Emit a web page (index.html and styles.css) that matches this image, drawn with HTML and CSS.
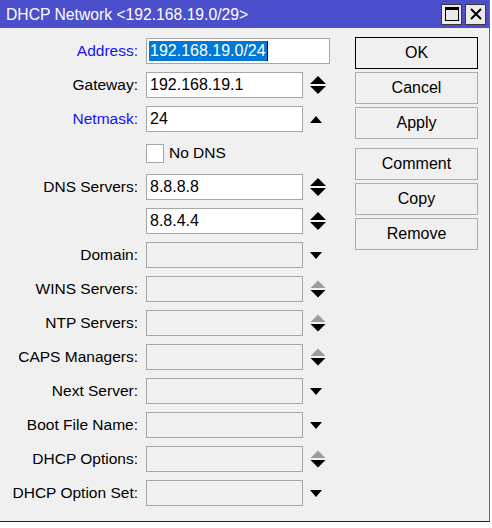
FILE: index.html
```html
<!DOCTYPE html>
<html>
<head>
<meta charset="utf-8">
<link rel="stylesheet" href="styles.css">
</head>
<body>
<div class="window">
  <div class="titlebar">
    <span class="title">DHCP Network &lt;192.168.19.0/29&gt;</span>
    <div class="tbtns">
      <div class="tbtn"><svg width="14" height="14" viewBox="0 0 14 14"><rect x="0.5" y="0.5" width="13" height="13" fill="none" stroke="#000" stroke-width="1"/><rect x="0" y="0" width="14" height="3" fill="#000"/></svg></div>
      <div class="tbtn"><svg width="12" height="12" viewBox="0 0 12 12"><path d="M1 1 L11 11 M11 1 L1 11" stroke="#000" stroke-width="2" fill="none"/></svg></div>
    </div>
  </div>
  <div class="content">
    <div class="form">
      <label class="lbl req">Address:</label>
      <div class="field wide white"><span class="sel">192.168.19.0/24</span></div>

      <label class="lbl">Gateway:</label>
      <div class="field white">192.168.19.1</div>
      <div class="arr"><svg width="16" height="20" viewBox="0 0 16 20"><polygon points="0,9 8,1 16,9" fill="#000"/><polygon points="0,11 16,11 8,19" fill="#000"/></svg></div>

      <label class="lbl req">Netmask:</label>
      <div class="field white">24</div>
      <div class="arr"><svg width="12" height="7" viewBox="0 0 12 7"><polygon points="0,7 6,0 12,7" fill="#000"/></svg></div>

      <div class="lbl"></div>
      <div class="check"><span class="box"></span><span>No DNS</span></div>

      <label class="lbl">DNS Servers:</label>
      <div class="field white">8.8.8.8</div>
      <div class="arr"><svg width="16" height="20" viewBox="0 0 16 20"><polygon points="0,9 8,1 16,9" fill="#000"/><polygon points="0,11 16,11 8,19" fill="#000"/></svg></div>

      <div class="lbl"></div>
      <div class="field white">8.8.4.4</div>
      <div class="arr"><svg width="16" height="20" viewBox="0 0 16 20"><polygon points="0,9 8,1 16,9" fill="#000"/><polygon points="0,11 16,11 8,19" fill="#000"/></svg></div>

      <label class="lbl">Domain:</label>
      <div class="field"></div>
      <div class="arr"><svg width="12" height="7" viewBox="0 0 12 7"><polygon points="0,0 12,0 6,7" fill="#000"/></svg></div>

      <label class="lbl">WINS Servers:</label>
      <div class="field"></div>
      <div class="arr"><svg width="16" height="20" viewBox="0 0 16 20"><polygon points="0.5,9 8,1.5 15.5,9" fill="#9a9e9a"/><polygon points="0.5,11 15.5,11 8,18.5" fill="#000"/></svg></div>

      <label class="lbl">NTP Servers:</label>
      <div class="field"></div>
      <div class="arr"><svg width="16" height="20" viewBox="0 0 16 20"><polygon points="0.5,9 8,1.5 15.5,9" fill="#9a9e9a"/><polygon points="0.5,11 15.5,11 8,18.5" fill="#000"/></svg></div>

      <label class="lbl">CAPS Managers:</label>
      <div class="field"></div>
      <div class="arr"><svg width="16" height="20" viewBox="0 0 16 20"><polygon points="0.5,9 8,1.5 15.5,9" fill="#9a9e9a"/><polygon points="0.5,11 15.5,11 8,18.5" fill="#000"/></svg></div>

      <label class="lbl">Next Server:</label>
      <div class="field"></div>
      <div class="arr"><svg width="12" height="7" viewBox="0 0 12 7"><polygon points="0,0 12,0 6,7" fill="#000"/></svg></div>

      <label class="lbl">Boot File Name:</label>
      <div class="field"></div>
      <div class="arr"><svg width="12" height="7" viewBox="0 0 12 7"><polygon points="0,0 12,0 6,7" fill="#000"/></svg></div>

      <label class="lbl">DHCP Options:</label>
      <div class="field"></div>
      <div class="arr"><svg width="16" height="20" viewBox="0 0 16 20"><polygon points="0.5,9 8,1.5 15.5,9" fill="#9a9e9a"/><polygon points="0.5,11 15.5,11 8,18.5" fill="#000"/></svg></div>

      <label class="lbl">DHCP Option Set:</label>
      <div class="field"></div>
      <div class="arr"><svg width="12" height="7" viewBox="0 0 12 7"><polygon points="0,0 12,0 6,7" fill="#000"/></svg></div>
    </div>
    <div class="buttons">
      <div class="btn default">OK</div>
      <div class="btn">Cancel</div>
      <div class="btn">Apply</div>
      <div class="btn sep">Comment</div>
      <div class="btn">Copy</div>
      <div class="btn">Remove</div>
    </div>
  </div>
</div>
</body>
</html>
```
FILE: styles.css
```css
* { box-sizing: border-box; }
html, body { margin: 0; padding: 0; background: #ffffff; }
body { font-family: "Liberation Sans", Arial, sans-serif; color: #000; }

.window {
  width: 490px;
  height: 522px;
  background: #f0f0f0;
  border-right: 1px solid #6a6a6a;
  border-bottom: 1px solid #202020;
  display: flex;
  flex-direction: column;
}

.titlebar {
  flex: 0 0 28px;
  height: 28px;
  background: #4b4fcb;
  color: #ffffff;
  display: flex;
  align-items: center;
  justify-content: space-between;
  padding-left: 6px;
  padding-right: 3px;
}
.title { font-size: 15.7px; margin-top: 2px; }
.tbtns { display: flex; gap: 3px; }
.tbtn {
  width: 21px;
  height: 21px;
  background: #eceae8;
  border: 1px solid #3a3a3a;
  display: flex;
  align-items: center;
  justify-content: center;
}

.content {
  display: flex;
  align-items: flex-start;
  min-height: 0;
}

.form {
  display: grid;
  grid-template-columns: 146px 157px 27px;
  grid-auto-rows: 26px;
  row-gap: 8px;
  padding-top: 10px;
}

.lbl {
  font-size: 15.5px;
  text-align: right;
  padding-right: 8px;
  align-self: center;
  white-space: nowrap;
}
.lbl.req { color: #1414f0; }

.field {
  height: 26px;
  border: 1px solid #a6a6a6;
  font-size: 16px;
  line-height: 24px;
  padding-left: 3px;
  white-space: nowrap;
  overflow: hidden;
}
.field.white { background: #ffffff; }
.field.wide { grid-column: 2 / 4; padding-left: 2px; }
.sel {
  display: inline-block;
  background: #0078d7;
  color: #ffffff;
  line-height: 20px;
  padding: 0 1px;
  border-right: 1px solid #000;
  vertical-align: middle;
  margin-top: -2px;
}

.arr {
  display: flex;
  align-items: center;
  padding-left: 7px;
}

.check {
  display: flex;
  align-items: center;
  gap: 5px;
  font-size: 15.5px;
  grid-column: 2 / 4;
}
.box {
  width: 18px;
  height: 19px;
  background: #ffffff;
  border: 1px solid #a6a6a6;
}

.buttons {
  margin-left: 25px;
  padding-top: 9px;
  display: flex;
  flex-direction: column;
  gap: 3px;
}
.btn {
  width: 123px;
  height: 32px;
  border: 1px solid #adadad;
  background: #f0f0f0;
  font-size: 16px;
  display: flex;
  align-items: center;
  justify-content: center;
}
.btn.default { border-color: #000000; }
.btn.sep { margin-top: 6px; }
```
